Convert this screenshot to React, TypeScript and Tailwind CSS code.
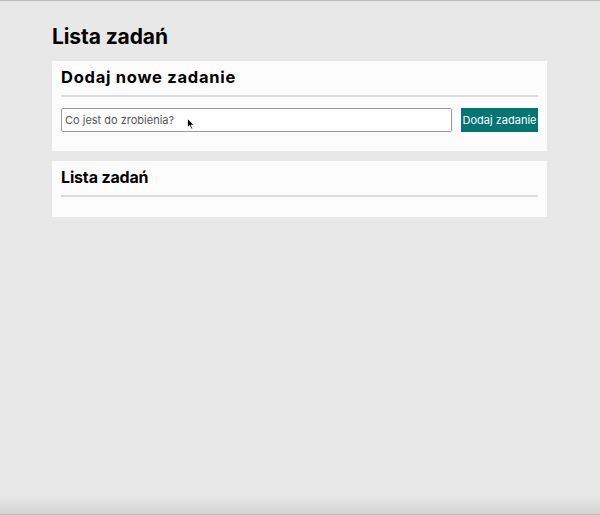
export default function App() {
  return (
    <main
      className="relative min-h-[515px] w-[600px] bg-[#e9e8e9] border-t border-[#b9b9b9] text-black"
      style={{ fontFamily: 'Inter, "Open Sans", sans-serif' }}
    >
      <div className="ml-[52px] mr-[53px] pt-[23px] pb-8">
        <h1 className="text-[21px] font-bold leading-[26px] tracking-[-0.005em] mb-[11px]">Lista zadań</h1>

        {/* Add task card */}
        <section className="bg-[#fdfcfd] px-[9px] pt-[6px] pb-[19px] mb-[10px]">
          <h2 className="text-[16.5px] font-bold leading-[20px] tracking-[0.045em] pb-[8px] border-b-2 border-[#dcdcdc]">
            Dodaj nowe zadanie
          </h2>
          <div className="flex items-center gap-[9px] mt-[11px]">
            <input
              type="text"
              placeholder="Co jest do zrobienia?"
              className="flex-1 h-[24px] border border-[#9b9b9b] rounded-[2px] bg-white px-[3px] text-[11px] placeholder:text-[#555] outline-none"
            />
            <button className="h-[24px] w-[77px] bg-[#047572] text-white text-[11px] leading-none">
              Dodaj zadanie
            </button>
          </div>
        </section>

        {/* Task list card */}
        <section className="bg-[#fdfcfd] px-[9px] pt-[6px] pb-[20px]">
          <h2 className="text-[16px] font-bold leading-[20px] tracking-[-0.01em] pb-[8px] border-b-2 border-[#dcdcdc]">
            Lista zadań
          </h2>
        </section>
      </div>

      {/* mouse cursor */}
      <svg className="absolute left-[187px] top-[117px]" width="8" height="12" viewBox="0 0 8 12">
        <path d="M0.5 0.5 L0.5 9.5 L2.6 7.6 L4.2 11 L5.6 10.4 L4 7.1 L7 7.1 Z" fill="#000" stroke="#fff" strokeWidth="0.8" />
      </svg>

      <div className="absolute bottom-0 left-0 right-0 h-[20px] bg-gradient-to-b from-transparent to-[#d4d3d4]" />
      <div className="absolute bottom-0 left-0 right-0 h-px bg-[#b9b9b9]" />
    </main>
  );
}
